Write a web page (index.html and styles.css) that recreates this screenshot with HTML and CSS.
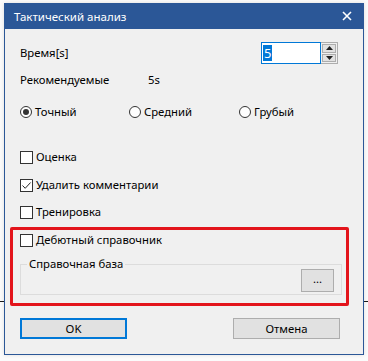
FILE: index.html
```html
<!DOCTYPE html>
<html>
<head>
<meta charset="utf-8">
<link rel="stylesheet" href="styles.css">
</head>
<body>
<div class="window">
  <div class="titlebar">
    <span class="title">Тактический анализ</span>
    <svg class="close" width="10" height="10" viewBox="0 0 10 10"><path d="M1 1L9 9M9 1L1 9" stroke="#fff" stroke-width="1.6"/></svg>
  </div>
  <div class="content">
    <div class="row row-time">
      <span>Время[s]</span>
      <div class="spin">
        <div class="spin-input"><span class="sel">5</span></div>
        <div class="spin-btns">
          <div class="spin-btn"><svg width="7" height="4" viewBox="0 0 7 4"><path d="M0 4L3.5 0L7 4Z" fill="#222"/></svg></div>
          <div class="spin-btn"><svg width="7" height="4" viewBox="0 0 7 4"><path d="M0 0L3.5 4L7 0Z" fill="#222"/></svg></div>
        </div>
      </div>
    </div>
    <div class="row row-rec">
      <span class="rec-label">Рекомендуемые</span>
      <span>5s</span>
    </div>
    <div class="row row-radio">
      <label class="radio r1"><span class="circle checked"></span>Точный</label>
      <label class="radio r2"><span class="circle"></span>Средний</label>
      <label class="radio r3"><span class="circle"></span>Грубый</label>
    </div>
    <label class="check c1"><span class="box"></span>Оценка</label>
    <label class="check c2"><span class="box"><svg width="11" height="11" viewBox="0 0 11 11"><path d="M1.5 5.5L4.2 8.3L9.6 2.5" fill="none" stroke="#222" stroke-width="1"/></svg></span>Удалить комментарии</label>
    <label class="check c3"><span class="box"></span>Тренировка</label>
    <div class="redbox">
      <label class="check c4"><span class="box"></span>Дебютный справочник</label>
      <fieldset class="group">
        <legend>Справочная база</legend>
        <div class="group-row"><button class="btn-dots">...</button></div>
      </fieldset>
    </div>
    <div class="buttons">
      <button class="btn ok">OK</button>
      <button class="btn">Отмена</button>
    </div>
  </div>
</div>
</body>
</html>
```

FILE: styles.css
```css
html, body {
  margin: 0;
  padding: 0;
}
body {
  width: 368px;
  height: 361px;
  overflow: hidden;
  background: linear-gradient(#fbfbfb 0, #fbfbfb 301px, #1a1a1a 301px, #1a1a1a 302px, #fbfbfb 302px);
  font-family: "Noto Sans", "Open Sans", sans-serif;
  font-size: 11.3px;
  color: #000;
  padding-top: 3px;
  box-sizing: border-box;
}
.window {
  margin-left: 4px;
  width: 360px;
  height: 352px;
  box-sizing: border-box;
  background: #f0f0f0;
  border: 1px solid #2b5797;
  border-top: none;
  box-shadow: 0 0 4px rgba(0,0,0,0.12);
}
.titlebar {
  height: 26px;
  background: #2b5797;
  margin: 0 -1px;
  display: flex;
  align-items: center;
  justify-content: space-between;
  padding: 0 12px 0 10px;
}
.title {
  color: #fff;
  font-size: 11.5px;
  line-height: 16px;
  margin-top: 1px;
}
.close {
  margin-top: -1px;
}
.content {
  padding: 0 14px 0 15px;
}
.row {
  display: flex;
  align-items: center;
  line-height: 16px;
}
.row-time {
  margin-top: 13px;
  height: 22px;
  justify-content: space-between;
  padding-right: 11px;
}
.spin {
  display: flex;
  height: 22px;
}
.spin-input {
  width: 60px;
  height: 22px;
  box-sizing: border-box;
  border: 1px solid #0078d7;
  background: #fff;
  padding: 2px 0 0 1px;
}
.sel {
  display: inline-block;
  background: #0078d7;
  color: #fff;
  line-height: 16px;
  padding: 0 1px;
  font-size: 13px;
}
.spin-btns {
  width: 17px;
  height: 22px;
  box-sizing: border-box;
  border: 1px solid #adadad;
  border-left: none;
  background: #f0f0f0;
  display: flex;
  flex-direction: column;
  gap: 1px;
  padding: 1px;
}
.spin-btn {
  flex: 1;
  background: #e1e1e1;
  border: 1px solid #adadad;
  display: flex;
  align-items: center;
  justify-content: center;
}
.row-rec {
  margin-top: 8px;
  height: 16px;
}
.rec-label {
  width: 128px;
}
.row-radio {
  margin-top: 16px;
  height: 16px;
}
.radio {
  display: flex;
  align-items: center;
}
.r1 { width: 109px; }
.r2 { width: 110px; }
.circle {
  width: 12px;
  height: 12px;
  box-sizing: border-box;
  border: 1px solid #333;
  border-radius: 50%;
  background: #fff;
  margin-right: 3px;
  display: flex;
  align-items: center;
  justify-content: center;
}
.circle.checked::after {
  content: "";
  width: 6px;
  height: 6px;
  border-radius: 50%;
  background: #333;
}
.check {
  display: flex;
  align-items: center;
  height: 16px;
  line-height: 16px;
}
.box {
  width: 13px;
  height: 13px;
  box-sizing: border-box;
  border: 1px solid #333;
  background: #fff;
  margin-right: 3px;
  display: flex;
  align-items: center;
  justify-content: center;
}
.c1 { margin-top: 29px; }
.c2 { margin-top: 12px; }
.c3 { margin-top: 11px; }
.redbox {
  margin: 7px 0 0 -10px;
  width: 339px;
  height: 79px;
  box-sizing: border-box;
  border: 3px solid #e3141b;
  border-radius: 2px;
  padding: 2px 4px 0 7px;
}
.group {
  margin: 8px 0 0 0;
  padding: 0 7px 2px 0;
  border: 1px solid #dcdcdc;
  height: 39px;
  box-sizing: border-box;
}
.group legend {
  padding: 0 2px;
  margin-left: 6px;
  line-height: 16px;
}
.group-row {
  display: flex;
  justify-content: flex-end;
  margin-top: -3px;
}
.btn-dots {
  width: 33px;
  height: 23px;
  background: #e1e1e1;
  border: 1px solid #adadad;
  font-family: inherit;
  font-size: 11.3px;
  padding: 0 0 4px 0;
  color: #000;
}
.buttons {
  display: flex;
  justify-content: space-between;
  margin-top: 12px;
  padding-right: 9px;
}
.btn {
  width: 107px;
  height: 21px;
  box-sizing: border-box;
  background: #e1e1e1;
  border: 1px solid #adadad;
  font-family: inherit;
  font-size: 11.3px;
  color: #000;
  padding: 0;
}
.btn.ok {
  border: 2px solid #0078d7;
}
```
